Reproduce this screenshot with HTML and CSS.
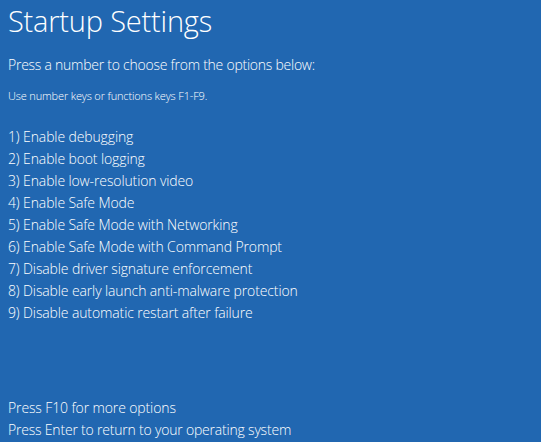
FILE: index.html
```html
<!DOCTYPE html>
<html>
<head>
<meta charset="utf-8">
<link rel="stylesheet" href="styles.css">
</head>
<body>
<div class="screen">
  <h1 class="title">Startup Settings</h1>
  <p class="lead">Press a number to choose from the options below:</p>
  <p class="hint">Use number keys or functions keys F1-F9.</p>
  <ul class="options">
    <li>1) Enable debugging</li>
    <li>2) Enable boot logging</li>
    <li>3) Enable low-resolution video</li>
    <li>4) Enable Safe Mode</li>
    <li>5) Enable Safe Mode with Networking</li>
    <li>6) Enable Safe Mode with Command Prompt</li>
    <li>7) Disable driver signature enforcement</li>
    <li>8) Disable early launch anti-malware protection</li>
    <li>9) Disable automatic restart after failure</li>
  </ul>
  <div class="footer">
    <p>Press F10 for more options</p>
    <p class="last">Press Enter to return to your operating system</p>
  </div>
</div>
</body>
</html>
```
FILE: styles.css
```css
html, body {
  margin: 0;
  padding: 0;
  background: #2167b1;
}
.screen {
  width: 541px;
  height: 442px;
  box-sizing: border-box;
  padding: 0 0 0 8px;
  display: flex;
  flex-direction: column;
  color: #ffffff;
  font-family: "Open Sans", "Noto Sans", sans-serif;
  font-weight: 300;
  overflow: hidden;
}
.title {
  margin: 1px 0 0 0;
  font-size: 29px;
  font-weight: 300;
  line-height: 40px;
  height: 40px;
  letter-spacing: -0.2px;
}
.lead {
  margin: 13px 0 0 0;
  font-size: 14px;
  line-height: 22px;
  letter-spacing: -0.25px;
}
.hint {
  margin: 13px 0 0 0;
  font-size: 11px;
  line-height: 14px;
  letter-spacing: -0.15px;
}
.options {
  list-style: none;
  margin: 23px 0 0 0;
  padding: 0;
  font-size: 14px;
  line-height: 22px;
  letter-spacing: -0.12px;
}
.footer {
  margin-top: auto;
  padding-bottom: 1px;
  font-size: 14px;
  line-height: 22px;
  letter-spacing: -0.12px;
}
.footer p {
  margin: 0;
}
.footer .last {
  letter-spacing: -0.2px;
}
```
